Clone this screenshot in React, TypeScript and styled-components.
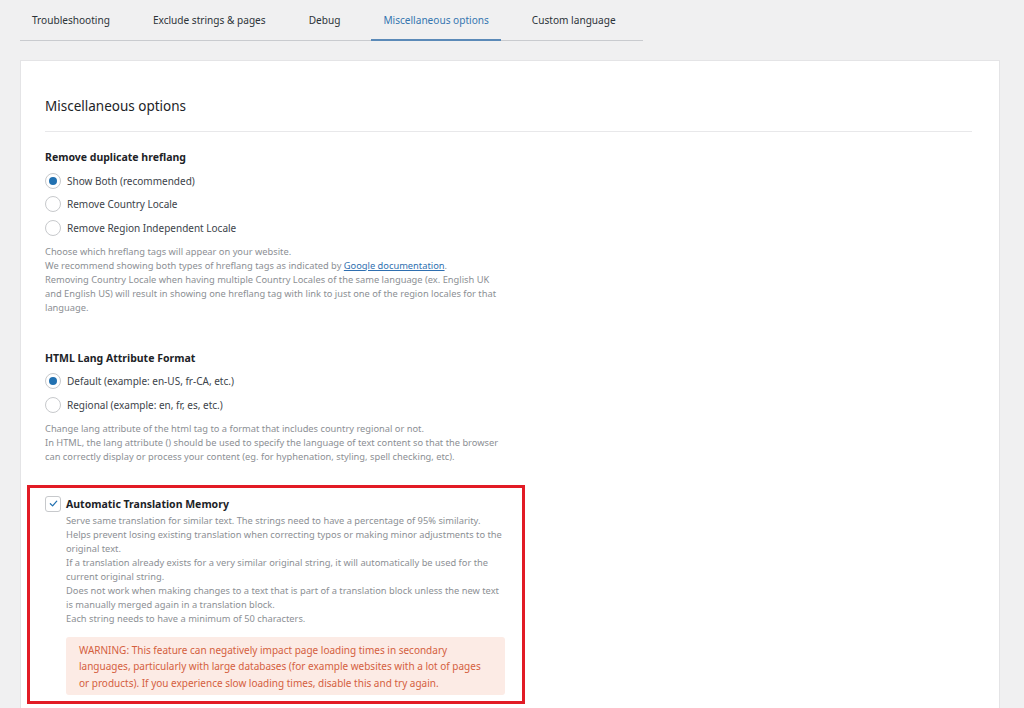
import React from 'react';
import styled, { createGlobalStyle } from 'styled-components';

const GlobalStyle = createGlobalStyle`
   * {
      box-sizing: border-box;
   }
   body {
      margin: 0;
      background: #f0f0f1;
      font-family: 'Noto Sans', 'Open Sans', sans-serif;
      color: #1d2327;
   }
`;

const Page = styled.div`
   padding: 0 24px 0 20px;
`;

const TabBar = styled.nav`
   display: flex;
   gap: 19px;
   width: 623px;
   height: 41px;
   border-bottom: 1px solid #c9cbcf;
`;

const Tab = styled.a<{ $active?: boolean }>`
   display: flex;
   align-items: center;
   flex-shrink: 0;
   padding: 0 12px;
   margin-bottom: -1px;
   font-size: 10.1px;
   white-space: nowrap;
   color: ${(p) => (p.$active ? '#3676b0' : '#2c3338')};
   border-bottom: 2px solid ${(p) => (p.$active ? '#5b8ab8' : 'transparent')};
   text-decoration: none;
   cursor: pointer;
`;

const Card = styled.section`
   margin-top: 19px;
   width: 980px;
   background: #fff;
   border: 1px solid #e4e4e6;
   border-bottom: none;
   padding: 35px 27px 40px 24px;
`;

const Title = styled.h2`
   margin: 0;
   font-size: 13.5px;
   line-height: 20px;
   font-weight: 400;
   color: #1d2327;
   padding-bottom: 15px;
   border-bottom: 1px solid #e8e8ea;
`;

const Settings = styled.div`
   width: 460px;
`;

const Group = styled.div<{ $top: number }>`
   margin-top: ${(p) => p.$top}px;
`;

const GroupLabel = styled.h3`
   margin: 0 0 4px;
   font-size: 10.5px;
   line-height: 16px;
   font-weight: 700;
   color: #1d2327;
`;

const RadioRow = styled.label`
   display: flex;
   align-items: center;
   gap: 6px;
   height: 23.5px;
   font-size: 10px;
   color: #3c434a;
`;

const Radio = styled.span<{ $checked?: boolean }>`
   display: inline-flex;
   align-items: center;
   justify-content: center;
   width: 16px;
   height: 16px;
   border-radius: 50%;
   border: 1px solid #c7c9cc;
   background: #fff;
   flex-shrink: 0;

   &::after {
      content: '';
      width: 8px;
      height: 8px;
      border-radius: 50%;
      background: ${(p) => (p.$checked ? '#2271b1' : 'transparent')};
   }
`;

const Hint = styled.p<{ $top?: number }>`
   margin: ${(p) => p.$top ?? 5}px 0 0;
   font-size: 9.3px;
   line-height: 14px;
   color: #8c8f94;

   a {
      color: #2f6fb0;
   }
`;

const Highlight = styled.div`
   margin: 21px 0 0 -18px;
   width: 498px;
   border: 3px solid #e21b25;
   padding: 8px 17px 6px 15px;
`;

const CheckRow = styled.div`
   display: flex;
   gap: 6px;
`;

const Checkbox = styled.span`
   display: inline-flex;
   align-items: center;
   justify-content: center;
   width: 16px;
   height: 16px;
   border: 1px solid #c7c9cc;
   border-radius: 3px;
   background: #fff;
   flex-shrink: 0;
`;

const CheckBody = styled.div`
   flex: 1;
   margin-left: -1px;
`;

const CheckLabel = styled.div`
   font-size: 10.5px;
   line-height: 16px;
   font-weight: 700;
   color: #1d2327;
`;

const Warning = styled.div`
   margin-top: 11px;
   padding: 5px 12px 4px 13px;
   background: #fcebe5;
   border-radius: 3px;
   color: #d4603e;
   font-size: 10px;
   line-height: 16.5px;
`;

const CheckMark = () => (
   <svg width='9' height='9' viewBox='0 0 10 10' fill='none'>
      <path d='M1.5 5.3 L4 7.6 L8.6 2.4' stroke='#2271b1' strokeWidth='1.4' strokeLinecap='round' strokeLinejoin='round' />
   </svg>
);

const tabs = ['Troubleshooting', 'Exclude strings & pages', 'Debug', 'Miscellaneous options', 'Custom language'];

const App = (): JSX.Element => {
   return (
      <Page>
         <GlobalStyle />
         <TabBar>
            {tabs.map((t) => (
               <Tab key={t} $active={t === 'Miscellaneous options'}>
                  {t}
               </Tab>
            ))}
         </TabBar>
         <Card>
            <Title>Miscellaneous options</Title>
            <Settings>
               <Group $top={17}>
                  <GroupLabel>Remove duplicate hreflang</GroupLabel>
                  <RadioRow>
                     <Radio $checked />
                     Show Both (recommended)
                  </RadioRow>
                  <RadioRow>
                     <Radio />
                     Remove Country Locale
                  </RadioRow>
                  <RadioRow>
                     <Radio />
                     Remove Region Independent Locale
                  </RadioRow>
                  <Hint>
                     Choose which hreflang tags will appear on your website.
                     <br />
                     We recommend showing both types of hreflang tags as indicated by{' '}
                     <a href='#'>Google documentation</a>.
                     <br />
                     Removing Country Locale when having multiple Country Locales of the same language (ex. English UK
                     and English US) will result in showing one hreflang tag with link to just one of the region
                     locales for that language.
                  </Hint>
               </Group>
               <Group $top={35}>
                  <GroupLabel>HTML Lang Attribute Format</GroupLabel>
                  <RadioRow>
                     <Radio $checked />
                     Default (example: en-US, fr-CA, etc.)
                  </RadioRow>
                  <RadioRow>
                     <Radio />
                     Regional (example: en, fr, es, etc.)
                  </RadioRow>
                  <Hint>
                     Change lang attribute of the html tag to a format that includes country regional or not.
                     <br />
                     In HTML, the lang attribute () should be used to specify the language of text content so that
                     the browser can correctly display or process your content (eg. for hyphenation, styling, spell
                     checking, etc).
                  </Hint>
               </Group>
               <Highlight>
                  <CheckRow>
                     <Checkbox>
                        <CheckMark />
                     </Checkbox>
                     <CheckBody>
                        <CheckLabel>Automatic Translation Memory</CheckLabel>
                        <Hint $top={2}>
                           Serve same translation for similar text. The strings need to have a percentage of 95%
                           similarity.
                           <br />
                           Helps prevent losing existing translation when correcting typos or making minor
                           adjustments to the original text.
                           <br />
                           If a translation already exists for a very similar original string, it will
                           automatically be used for the current original string.
                           <br />
                           Does not work when making changes to a text that is part of a translation block unless
                           the new text is manually merged again in a translation block.
                           <br />
                           Each string needs to have a minimum of 50 characters.
                        </Hint>
                        <Warning>
                           WARNING: This feature can negatively impact page loading times in secondary languages,
                           particularly with large databases (for example websites with a lot of pages or
                           products). If you experience slow loading times, disable this and try again.
                        </Warning>
                     </CheckBody>
                  </CheckRow>
               </Highlight>
            </Settings>
         </Card>
      </Page>
   );
};

export default App;
